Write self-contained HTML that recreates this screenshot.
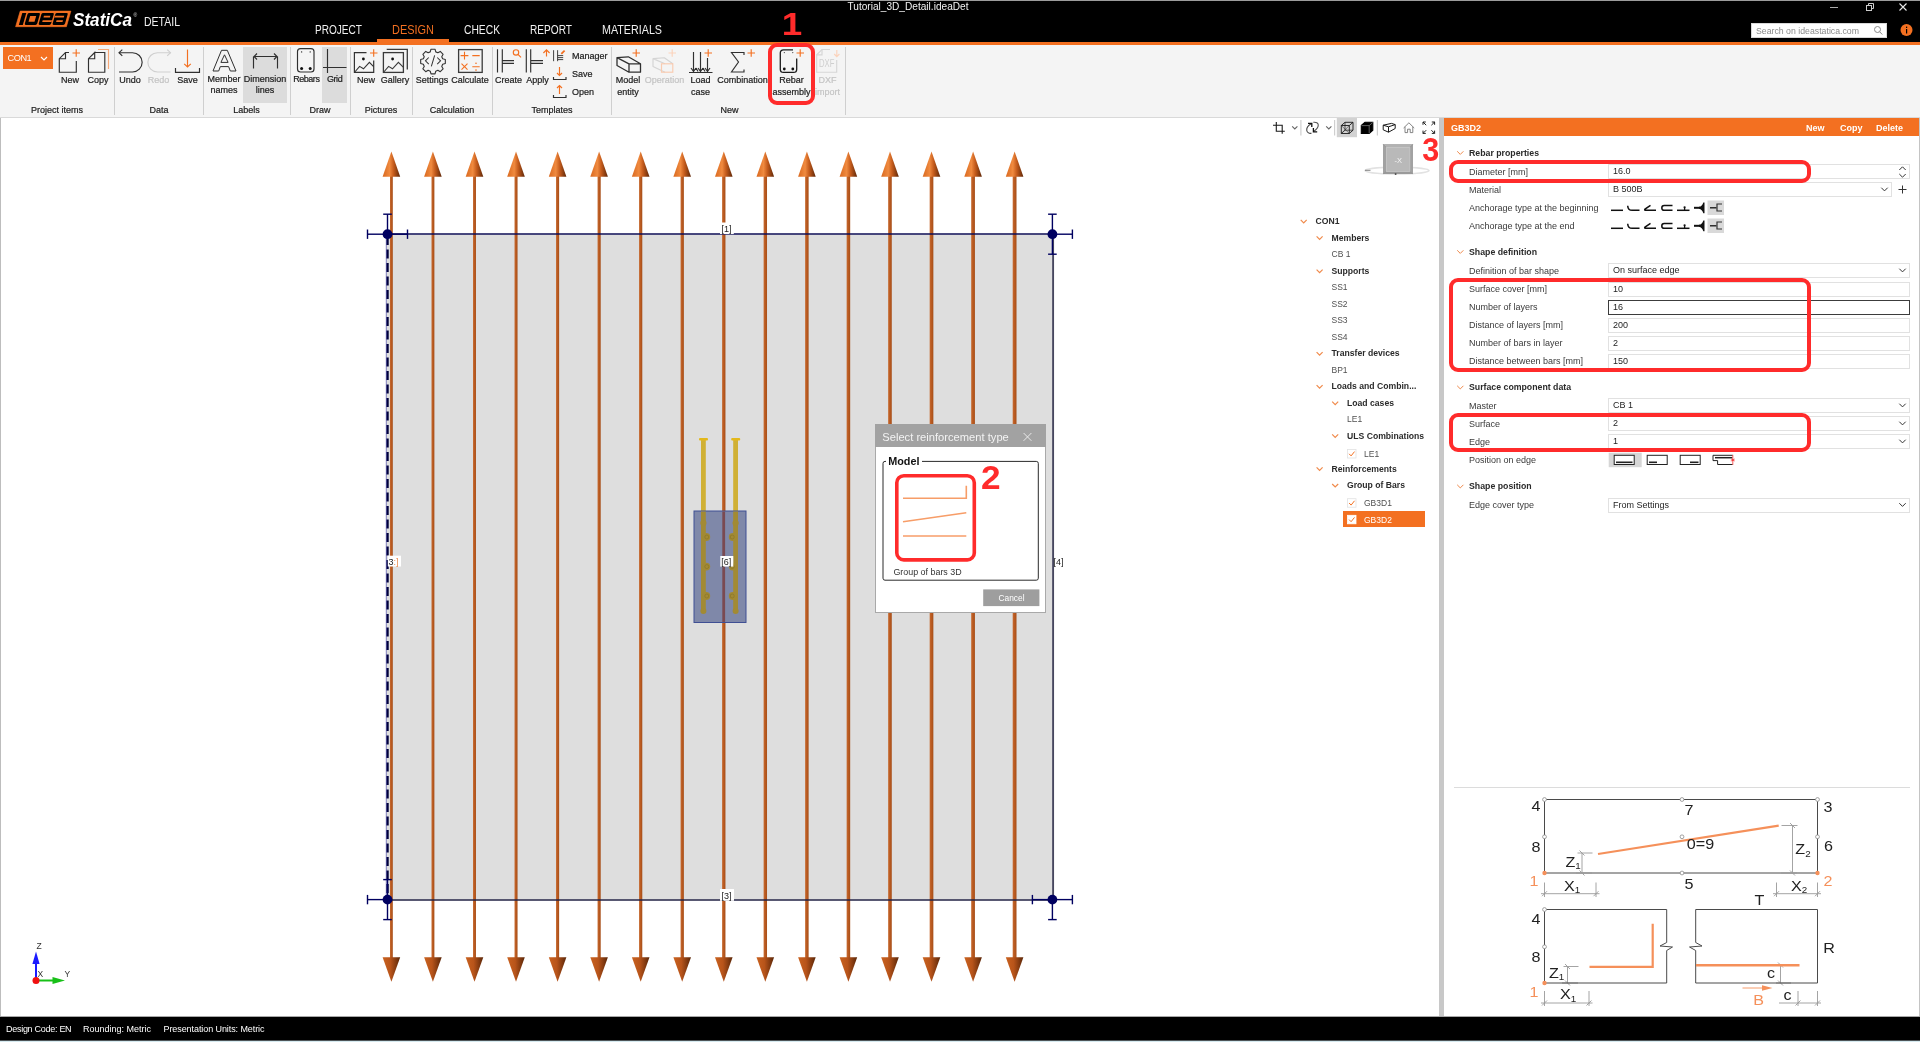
<!DOCTYPE html>
<html>
<head>
<meta charset="utf-8">
<title>Tutorial_3D_Detail.ideaDet</title>
<style>
*{box-sizing:border-box;margin:0;padding:0}
html,body{width:1920px;height:1042px;overflow:hidden;background:#fff;font-family:"Liberation Sans",sans-serif;font-size:9px;color:#2b2b2b}
.a{position:absolute}
.t{position:absolute;white-space:nowrap;line-height:12px;height:12px}
.c{text-align:center;transform:translateX(-50%)}
#top{left:0;top:0;width:1920px;height:42px;background:#000;border-top:1px solid #9c9c9c}
#oline{left:0;top:42px;width:1920px;height:3px;background:#f37021}
#ribbon{left:0;top:45px;width:1920px;height:72px;background:#f4f4f4}
#ribline{left:0;top:117px;width:1920px;height:1px;background:#d9d9d9}
.sep{position:absolute;top:47px;width:1px;height:68px;background:#cfcfcf}
.hl{position:absolute;top:47px;height:56px;background:#dcdcdc}
.tab{position:absolute;top:22px;font-size:12.5px;color:#f0f0f0;line-height:16px;white-space:nowrap}
.rl{font-size:9px;color:#1c1c1c;-webkit-text-stroke:0.2px #1c1c1c}
.dis{color:#c4c4c4;-webkit-text-stroke:0.2px #c4c4c4}
#view{left:0;top:118px;width:1439px;height:899px;background:#fff;border-left:1px solid #bdbdbd}
#split{left:1439px;top:118px;width:5px;height:899px;background:#c8c8c8}
#panel{left:1444px;top:118px;width:476px;height:899px;background:#fff;border-right:1px solid #c4c4c4}
#phead{left:1444px;top:118px;width:475px;height:18px;background:#f37021}
#status{left:0;top:1017px;width:1920px;height:23px;background:#000}
.st{color:#fff;font-size:9px;top:1023px}
.pl{left:1469px;color:#3a3a3a}
.pb{left:1469px;font-weight:bold;color:#2b2b2b;font-size:8.75px}
.inp{position:absolute;left:1608px;width:302px;height:15px;border:1px solid #e1e1e1;background:#fff}
.pv{left:1613px;color:#1e1e1e}
.tr{color:#505050;font-size:8.5px}
.tb{font-weight:bold;color:#2b2b2b;font-size:8.65px}
.red{position:absolute;border:3.5px solid #ff2b2b;border-radius:8px}
.num{position:absolute;color:#ff2b2b;font-weight:bold;font-size:34px;line-height:34px}
</style>
</head>
<body>
<div id="root" style="position:absolute;left:0;top:0;width:1920px;height:1042px;will-change:transform">
<div class="a" id="top"></div>
<div class="a" id="oline"></div>
<div class="a" id="ribbon"></div>
<div class="a" id="ribline"></div>
<!-- logo -->
<svg class="a" style="left:14px;top:9px" width="172" height="22" viewBox="0 0 172 22">
  <polygon points="6.2,2.1 56.9,2.1 52.4,17.7 1.6,17.7" fill="#f37021" stroke="#f37021" stroke-width="0.6" stroke-linejoin="round"/>
  <g transform="skewX(-16)" fill="#000" stroke="none">
    <rect x="9.4" y="3.9" width="4" height="12"/>
    <rect x="15" y="3.9" width="12.4" height="12" rx="1.4"/>
    <rect x="18.2" y="7" width="6" height="5.8" fill="#f37021"/>
    <rect x="28.9" y="3.9" width="12.4" height="12" rx="1.4"/>
    <rect x="31.9" y="6.7" width="6.4" height="1.7" fill="#f37021"/>
    <rect x="31.9" y="11.2" width="9.4" height="1.7" fill="#f37021"/>
    <rect x="42.8" y="3.9" width="12.4" height="12" rx="1.4"/>
    <rect x="42.8" y="6.7" width="9.4" height="1.7" fill="#f37021"/>
    <rect x="45.8" y="11.2" width="6.4" height="1.7" fill="#f37021"/>
  </g>
  <text x="59" y="17" font-family="Liberation Sans" font-weight="bold" font-style="italic" font-size="18" fill="#fff" textLength="59" lengthAdjust="spacingAndGlyphs">StatiCa</text>
  <text x="119.5" y="8" font-family="Liberation Sans" font-size="5" fill="#ddd">&#174;</text>
  <text x="130" y="17" font-family="Liberation Sans" font-size="12" fill="#f0f0f0" textLength="36" lengthAdjust="spacingAndGlyphs">DETAIL</text>
</svg>
<svg class="a" style="left:300px;top:18px" width="400" height="24" viewBox="0 0 400 24" font-family="Liberation Sans" font-size="12.5" fill="#f0f0f0">
  <text x="15" y="16" textLength="47" lengthAdjust="spacingAndGlyphs">PROJECT</text>
  <text x="92" y="16" textLength="42" lengthAdjust="spacingAndGlyphs" fill="#f37021">DESIGN</text>
  <text x="164" y="16" textLength="36" lengthAdjust="spacingAndGlyphs">CHECK</text>
  <text x="230" y="16" textLength="42" lengthAdjust="spacingAndGlyphs">REPORT</text>
  <text x="302" y="16" textLength="60" lengthAdjust="spacingAndGlyphs">MATERIALS</text>
</svg>
<div class="a" style="left:377px;top:39px;width:72px;height:3px;background:#f37021"></div>
<svg class="a" style="left:840px;top:0" width="140" height="14" viewBox="0 0 140 14"><text x="7.5" y="10" font-family="Liberation Sans" font-size="10.5" fill="#f2f2f2" textLength="121" lengthAdjust="spacingAndGlyphs">Tutorial_3D_Detail.ideaDet</text></svg>
<!-- window controls -->
<svg class="a" style="left:1820px;top:0" width="100" height="16" viewBox="0 0 100 16">
  <line x1="10" y1="7.5" x2="18" y2="7.5" stroke="#aaa" stroke-width="1"/>
  <rect x="46.5" y="5.5" width="5" height="5" fill="none" stroke="#ccc" stroke-width="1"/>
  <path d="M48.5 5.5V3.5H53.5V8.5H51.5" fill="none" stroke="#ccc" stroke-width="1"/>
  <path d="M79.5 3.5L86.5 10.5M86.5 3.5L79.5 10.5" stroke="#e8e8e8" stroke-width="1.1"/>
</svg>
<!-- search -->
<div class="a" style="left:1751px;top:23px;width:136px;height:15px;background:#fff;border:1px solid #d8d8d8"></div>
<svg class="a" style="left:1751px;top:23px" width="136" height="15" viewBox="0 0 136 15"><text x="5" y="11" font-family="Liberation Sans" font-size="9" fill="#8a8a8a" textLength="103" lengthAdjust="spacingAndGlyphs">Search on ideastatica.com</text>
<circle cx="126.5" cy="6.5" r="3" fill="none" stroke="#8a8a8a" stroke-width="1"/><line x1="128.7" y1="8.8" x2="131.3" y2="11.5" stroke="#8a8a8a" stroke-width="1"/></svg>
<svg class="a" style="left:1899px;top:23px" width="14" height="14" viewBox="0 0 14 14"><circle cx="7.5" cy="7" r="6" fill="#f37021"/><rect x="7" y="6" width="1.2" height="4.5" fill="#000"/><rect x="7" y="3.6" width="1.2" height="1.4" fill="#000"/></svg>
<!-- ribbon highlights & separators -->
<div class="hl" style="left:243px;width:44px"></div>
<div class="hl" style="left:322px;width:25px"></div>
<div class="sep" style="left:114px"></div><div class="sep" style="left:203px"></div><div class="sep" style="left:290px"></div>
<div class="sep" style="left:350px"></div><div class="sep" style="left:412px"></div><div class="sep" style="left:492px"></div>
<div class="sep" style="left:611px"></div><div class="sep" style="left:845px"></div>
<div class="a" style="left:3px;top:47px;width:49.7px;height:22px;background:#f37021"></div>
<div class="t" style="left:7.5px;top:52px;color:#fff;font-size:9.2px;letter-spacing:-0.45px">CON1</div>
<svg class="a" style="left:0;top:45px" width="860" height="72" viewBox="0 45 860 72" fill="none" stroke="#303030" stroke-width="1.15" stroke-linecap="butt">
  <path d="M41 57l3 3l3-3" stroke="#fff"/>
  <!-- New -->
  <path d="M69 52.5H65.5L59.3 58.7V72.2H76.3V61"/><path d="M65.5 52.5V58.7H59.3"/>
  <path d="M72.5 53H80M76.2 49.3V56.7" stroke="#f37021"/>
  <!-- Copy -->
  <path d="M94.7 52.5H104.8V72.2H88.5V58.7L94.7 52.5V58.7H88.5"/>
  <path d="M98 49.5H108.5V69" stroke="#f7a877"/>
  <!-- Undo -->
  <path d="M119 52.7H132.5A9.6 9.6 0 0 1 132.5 72H119"/><path d="M122.3 49.6L119 52.7L122.3 55.8"/>
  <!-- Redo -->
  <g stroke="#cfcfcf"><path d="M170.5 52.7H157.5A9.6 9.6 0 0 0 157.5 72H170.5"/><path d="M167.2 49.6L170.5 52.7L167.2 55.8"/></g>
  <!-- Save -->
  <path d="M187.5 49.5V67M184.2 63.8L187.5 67L190.8 63.8" stroke="#f37021"/>
  <path d="M175.5 68V72.3H199.5V68"/>
  <!-- Member names (A) -->
  <path d="M213 71L221.5 50.3H227.3L236 71H230.3L228.6 66.6H220.3L218.7 71Z M220.9 62.4L224.5 54.8L228.1 62.4Z" stroke-width="1"/>
  <!-- Dimension lines -->
  <path d="M253.5 56.5V68.5M277.5 56.5V68.5M254 56.5H277"/><path d="M257 53.5L254 56.5L257 59.5M274 53.5L277 56.5L274 59.5"/>
  <!-- Rebars -->
  <rect x="297.5" y="48.6" width="16.5" height="23.4" rx="3"/>
  <circle cx="301.6" cy="68.4" r="1.5" fill="#111" stroke="none"/><circle cx="310.2" cy="68.4" r="1.5" fill="#111" stroke="none"/>
  <circle cx="301.6" cy="51.9" r="0.7" fill="#2b2b2b" stroke="none"/><circle cx="310.2" cy="51.9" r="0.7" fill="#2b2b2b" stroke="none"/>
  <!-- Grid -->
  <path d="M327.5 49V73M323 67.5H346.5"/>
  <!-- New picture -->
  <g stroke="#333" stroke-width="1.2"><path d="M366.5 52.6H354.4V72.3H373.7V60.6"/><path d="M354.8 72L359.6 66.4L363.5 68.8L369.4 62.4L373.6 66.6" stroke-width="1.1"/></g><circle cx="363.4" cy="59" r="1.4" fill="#111" stroke="none"/>
  <path d="M370 53H377.5M373.7 49.3V56.7" stroke="#f37021"/>
  <!-- Gallery -->
  <g stroke="#3a3a3a" stroke-width="1.3"><rect x="383.4" y="52.6" width="20" height="19.8"/><path d="M383.8 72L388.6 66.4L392.5 68.8L398.4 62.4L403.2 67.2" stroke-width="1.1"/><path d="M386.7 49.4H407.3V69.6"/></g><circle cx="392.6" cy="59" r="1.4" fill="#111" stroke="none"/>
  <!-- Settings gear -->
  <g transform="translate(433,60.8) scale(0.92)" stroke="#333">
    <path d="M-2.2,-12.6h4.4l.8,2.9l2.3,1l2.6,-1.5l3.1,3.1l-1.5,2.6l1,2.3l2.9,.8v4.4l-2.9,.8l-1,2.3l1.5,2.6l-3.1,3.1l-2.6,-1.5l-2.3,1l-.8,2.9h-4.4l-.8,-2.9l-2.3,-1l-2.6,1.5l-3.1,-3.1l1.5,-2.6l-1,-2.3l-2.9,-.8v-4.4l2.9,-.8l1,-2.3l-1.5,-2.6l3.1,-3.1l2.6,1.5l2.3,-1z" stroke-width="1.2" stroke-linejoin="round"/>
    <path d="M-4.6,-3.6L-8.2,0L-4.6,3.6M4.6,-3.6L8.2,0L4.6,3.6M1.8,-6L-1.8,6" stroke-width="1.1"/>
  </g>
  <!-- Calculate -->
  <rect x="458.6" y="49.6" width="23.6" height="22.8" stroke="#3a3a3a" stroke-width="1.3"/>
  <path d="M460.6 55.6H468.4M464.5 51.7V59.5M472.3 55.6H479.7M461.5 63.7L467.5 69.7M467.5 63.7L461.5 69.7M472.3 66.7H479.7" stroke="#f37021" stroke-width="1.1"/>
  <circle cx="476" cy="63.3" r="0.8" fill="#f37021" stroke="none"/><circle cx="476" cy="70.1" r="0.8" fill="#f37021" stroke="none"/>
  <!-- Create -->
  <path d="M497.5 49.2V72.4M502.3 49.2V72.4M502.3 60.6H514M502.3 63.4H514"/>
  <circle cx="516" cy="52.4" r="2.7" stroke="#f37021"/><path d="M518 54.4L521 57.4" stroke="#f37021"/>
  <!-- Apply -->
  <path d="M526.3 49.2V72.4M530.7 49.2V72.4M530.7 60.6H543M530.7 63.4H543"/>
  <path d="M546.5 56.6V49.8M543.4 53L546.5 49.8L549.6 53" stroke="#f37021"/>
  <!-- Manager small -->
  <path d="M553.6 50.2V61.2M557.6 50.2V61.2M557.6 55.6H563.2M557.6 57.6H563.2M557.6 59.6H563.2" stroke-width="0.9"/><path d="M561.3 53.8L564.6 50.6" stroke="#f37021" stroke-width="1.8"/>
  <!-- Save small -->
  <path d="M559.5 67V75.5M557 73L559.5 75.5L562 73" stroke="#f37021"/><path d="M553.5 77V79.5H566V77"/>
  <!-- Open small -->
  <path d="M559.5 94V85.5M557 88L559.5 85.5L562 88" stroke="#f37021"/><path d="M553.5 95V97.5H566V95"/>
  <!-- Model entity -->
  <path d="M617 57.6L628.3 56.8L640.5 63.8V72.2H629L617 65.5Z M617 57.6L629 63.8H640.5M629 63.8V72.2" stroke-width="1.3" stroke-linejoin="round"/>
  <path d="M632.5 53H640M636.2 49.3V56.7" stroke="#f37021"/>
  <!-- Operation (disabled) -->
  <path d="M653 58.6L664.3 57.8L672.8 63.8M665 72.2L653 66.5V58.6L665 63.8" stroke="#d4d4d4" stroke-linejoin="round"/>
  <rect x="661.5" y="63.8" width="11.3" height="8.4" stroke="#f9cbb0"/>
  <path d="M668.5 53H676M672.2 49.3V56.7" stroke="#fbd3bb"/>
  <!-- Load case -->
  <path d="M689 72.5H712.5M693.5 52V71.5M700.5 52V71.5M707.5 58V71.5M691 68L693.5 71.5L696 68M698 68L700.5 71.5L703 68M705 68L707.5 71.5L710 68M696 68L698 71.5M703 68L705 71.5"/>
  <path d="M704.5 53H712M708.2 49.3V56.7" stroke="#f37021"/>
  <!-- Combination -->
  <path d="M744 55V52.5H731.5L738.5 62L731.5 72H744V69.5"/>
  <path d="M747.5 53H755M751.2 49.3V56.7" stroke="#f37021"/>
  <!-- Rebar assembly -->
  <path d="M793 49.8H783.5A3.2 3.2 0 0 0 780.3 53V69.2A3.2 3.2 0 0 0 783.5 72.4H793.5A3.2 3.2 0 0 0 796.7 69.2V58.5" stroke-width="1.3" stroke="#1c1c1c"/>
  <circle cx="784.3" cy="69" r="1.4" fill="#111" stroke="none"/><circle cx="792.8" cy="69" r="1.4" fill="#111" stroke="none"/>
  <circle cx="784.3" cy="52.6" r="0.55" fill="#2b2b2b" stroke="none"/><circle cx="792.8" cy="52.6" r="0.55" fill="#2b2b2b" stroke="none"/>
  <path d="M796.5 53H804M800.2 49.3V56.7" stroke="#f37021"/>
  <!-- DXF import (disabled) -->
  <g stroke="#d6d6d6"><path d="M830 49.5H822L816.7 54.8V72.2H836.7V60"/><path d="M822 49.5V54.8H816.7"/></g>
  <path d="M836.8 50V56.5M834.2 54L836.8 56.7L839.4 54" stroke="#fbd3bb"/>
  <text x="819" y="67.4" font-family="Liberation Sans" font-size="10.8" fill="#cfcfcf" stroke="none" textLength="15.4" lengthAdjust="spacingAndGlyphs">DXF</text>
</svg>
<!-- ribbon labels -->
<div class="t c rl" style="left:70px;top:74px">New</div>
<div class="t c rl" style="left:98px;top:74px">Copy</div>
<div class="t c rl" style="left:130px;top:74px">Undo</div>
<div class="t c rl dis" style="left:158.5px;top:74px">Redo</div>
<div class="t c rl" style="left:187.5px;top:74px">Save</div>
<div class="t c rl" style="left:224px;top:73px">Member</div><div class="t c rl" style="left:224px;top:84px">names</div>
<div class="t c rl" style="left:265px;top:73px">Dimension</div><div class="t c rl" style="left:265px;top:84px">lines</div>
<div class="t c rl" style="left:306.3px;top:73px;letter-spacing:-0.45px">Rebars</div>
<div class="t c rl" style="left:334.6px;top:73px;letter-spacing:-0.45px">Grid</div>
<div class="t c rl" style="left:366px;top:74px">New</div>
<div class="t c rl" style="left:395px;top:74px">Gallery</div>
<div class="t c rl" style="left:432px;top:74px">Settings</div>
<div class="t c rl" style="left:470px;top:74px">Calculate</div>
<div class="t c rl" style="left:508.5px;top:74px">Create</div>
<div class="t c rl" style="left:537.5px;top:74px">Apply</div>
<div class="t rl" style="left:572px;top:50px">Manager</div>
<div class="t rl" style="left:572px;top:68px">Save</div>
<div class="t rl" style="left:572px;top:86px">Open</div>
<div class="t c rl" style="left:628px;top:74px">Model</div><div class="t c rl" style="left:628px;top:85.5px">entity</div>
<div class="t c rl dis" style="left:664.5px;top:74px">Operation</div>
<div class="t c rl" style="left:700.5px;top:74px">Load</div><div class="t c rl" style="left:700.5px;top:85.5px">case</div>
<div class="t c rl" style="left:742.5px;top:74px">Combination</div>
<div class="t c rl" style="left:791.5px;top:74px">Rebar</div><div class="t c rl" style="left:791.5px;top:85.5px">assembly</div>
<div class="t c rl dis" style="left:827.5px;top:74px">DXF</div><div class="t c rl dis" style="left:827.5px;top:85.5px">import</div>
<!-- group labels -->
<div class="t c rl" style="left:57px;top:104px">Project items</div>
<div class="t c rl" style="left:159px;top:104px">Data</div>
<div class="t c rl" style="left:246.5px;top:104px">Labels</div>
<div class="t c rl" style="left:320px;top:104px">Draw</div>
<div class="t c rl" style="left:381px;top:104px">Pictures</div>
<div class="t c rl" style="left:452px;top:104px">Calculation</div>
<div class="t c rl" style="left:552px;top:104px">Templates</div>
<div class="t c rl" style="left:729.5px;top:104px">New</div>
<div class="a" id="view"></div>
<svg class="a" style="left:0;top:118px" width="1440" height="898" viewBox="0 118 1440 898">
<defs>
  <linearGradient id="gb" x1="0" x2="1" y1="0" y2="0"><stop offset="0" stop-color="#c66a30"/><stop offset="0.4" stop-color="#bc5c22"/><stop offset="1" stop-color="#a64e18"/></linearGradient>
  <linearGradient id="ga" x1="0" x2="1" y1="0" y2="0"><stop offset="0" stop-color="#d9691f"/><stop offset="0.4" stop-color="#f08a3f"/><stop offset="0.62" stop-color="#c65c1c"/><stop offset="1" stop-color="#5e2708"/></linearGradient>
  <linearGradient id="gd" x1="0" x2="1" y1="0" y2="0"><stop offset="0" stop-color="#c9621f"/><stop offset="0.45" stop-color="#b8541a"/><stop offset="1" stop-color="#5a2608"/></linearGradient>
  <g id="ah">
    <polygon points="0,151.5 8.8,176.8 -8.8,176.8" fill="url(#ga)"/>
    <polygon points="-8.8,957.3 8.8,957.3 0,981.8" fill="url(#gd)"/>
  </g>
</defs>
<rect x="386.8" y="234.5" width="665.7" height="665" fill="#dedede"/>
<!-- left dashed edge -->
<path d="M387.4 236V898" stroke="#00003c" stroke-width="2.6" stroke-dasharray="9 4.5"/>
<path d="M386.3 236V898" stroke="#5c5ca8" stroke-width="0.8"/>
<!-- bars -->
<rect x="390.00" y="176" width="2.80" height="782" fill="url(#gb)"/><use href="#ah" x="391.4"/><rect x="431.51" y="176" width="2.87" height="782" fill="url(#gb)"/><use href="#ah" x="432.9"/><rect x="473.03" y="176" width="2.93" height="782" fill="url(#gb)"/><use href="#ah" x="474.5"/><rect x="514.54" y="176" width="3.00" height="782" fill="url(#gb)"/><use href="#ah" x="516.0"/><rect x="556.05" y="176" width="3.07" height="782" fill="url(#gb)"/><use href="#ah" x="557.6"/><rect x="597.57" y="176" width="3.13" height="782" fill="url(#gb)"/><use href="#ah" x="599.1"/><rect x="639.08" y="176" width="3.20" height="782" fill="url(#gb)"/><use href="#ah" x="640.7"/><rect x="680.60" y="176" width="3.27" height="782" fill="url(#gb)"/><use href="#ah" x="682.2"/><rect x="722.11" y="176" width="3.33" height="782" fill="url(#gb)"/><use href="#ah" x="723.8"/><rect x="763.62" y="176" width="3.40" height="782" fill="url(#gb)"/><use href="#ah" x="765.3"/><rect x="805.14" y="176" width="3.47" height="782" fill="url(#gb)"/><use href="#ah" x="806.9"/><rect x="846.65" y="176" width="3.53" height="782" fill="url(#gb)"/><use href="#ah" x="848.4"/><rect x="888.16" y="176" width="3.60" height="782" fill="url(#gb)"/><use href="#ah" x="890.0"/><rect x="929.68" y="176" width="3.67" height="782" fill="url(#gb)"/><use href="#ah" x="931.5"/><rect x="971.19" y="176" width="3.73" height="782" fill="url(#gb)"/><use href="#ah" x="973.1"/><rect x="1012.70" y="176" width="3.80" height="782" fill="url(#gb)"/><use href="#ah" x="1014.6"/>
<!-- borders -->
<path d="M388 233.9H1052.4" stroke="#0c0c54" stroke-width="1.5"/>
<path d="M388 900.1H1052.4" stroke="#222244" stroke-width="1.5"/>
<path d="M1053.1 234V900" stroke="#46465e" stroke-width="1.9"/>
<!-- plate + anchors -->
<g>
  <rect x="701" y="439.5" width="4.8" height="72" fill="#d0b034"/><rect x="733.2" y="439.5" width="4.8" height="72" fill="#d0b034"/>
  <rect x="699" y="438" width="9" height="2.6" rx="1" fill="#e3b81c"/><rect x="731.2" y="438" width="9" height="2.6" rx="1" fill="#e3b81c"/>
  <rect x="694" y="511" width="52" height="111.5" fill="#7f88a9" stroke="#3f4f93" stroke-width="1"/>
  <rect x="722.3" y="511.5" width="2.8" height="110.5" fill="#7a4a52"/>
  <g fill="#a28a34"><rect x="701" y="511.5" width="4.8" height="99"/><rect x="733.2" y="511.5" width="4.8" height="99"/>
  <circle cx="703.4" cy="523" r="3.1"/><circle cx="735.6" cy="523" r="3.1"/>
  <circle cx="706.3" cy="537" r="3.9"/><circle cx="732.7" cy="537" r="3.9"/>
  <circle cx="706.3" cy="566.6" r="3.9"/><circle cx="732.7" cy="566.6" r="3.9"/>
  <circle cx="706.3" cy="596" r="3.9"/><circle cx="732.7" cy="596" r="3.9"/>
  <circle cx="703.4" cy="611" r="3"/><circle cx="735.6" cy="611" r="3"/></g>
  <g fill="none" stroke="#8a7428" stroke-width="0.7"><circle cx="706.8" cy="537" r="2"/><circle cx="732.2" cy="537" r="2"/><circle cx="706.8" cy="566.6" r="2"/><circle cx="732.2" cy="566.6" r="2"/><circle cx="706.8" cy="596" r="2"/><circle cx="732.2" cy="596" r="2"/></g>
</g>
<!-- support nodes -->
<g stroke="#000060" stroke-width="1.4" fill="none"><path d="M387.5 234.2L367.5 234.2"/><path d="M367.5 229.5V238.89999999999998"/><path d="M387.5 234.2L407.5 234.2"/><path d="M407.5 229.5V238.89999999999998"/><path d="M387.5 234.2L387.5 214.2"/><path d="M383.2 214.2H391.8"/><circle cx="387.5" cy="234.2" r="4.9" fill="#000060" stroke="none"/><path d="M1052.4 234.2L1072.4 234.2"/><path d="M1072.4 229.5V238.89999999999998"/><path d="M1052.4 234.2L1052.4 214.2"/><path d="M1048.1000000000001 214.2H1056.7"/><path d="M1052.4 234.2L1052.4 254.2"/><path d="M1048.1000000000001 254.2H1056.7"/><circle cx="1052.4" cy="234.2" r="4.9" fill="#000060" stroke="none"/><path d="M387.5 899.6L367.5 899.6"/><path d="M367.5 894.9V904.3000000000001"/><path d="M387.5 899.6L387.5 879.6"/><path d="M383.2 879.6H391.8"/><path d="M387.5 899.6L387.5 919.6"/><path d="M383.2 919.6H391.8"/><circle cx="387.5" cy="899.6" r="4.9" fill="#000060" stroke="none"/><path d="M1052.4 899.6L1032.4 899.6"/><path d="M1032.4 894.9V904.3000000000001"/><path d="M1052.4 899.6L1072.4 899.6"/><path d="M1072.4 894.9V904.3000000000001"/><path d="M1052.4 899.6L1052.4 919.6"/><path d="M1048.1000000000001 919.6H1056.7"/><circle cx="1052.4" cy="899.6" r="4.9" fill="#000060" stroke="none"/></g>
<!-- labels -->
<g font-family="Liberation Sans" font-size="9" fill="#222">
  <rect x="720" y="222.5" width="13.8" height="11.6" fill="#fff"/><text x="721.5" y="232.3">[1]</text>
  <rect x="720" y="889" width="14" height="11.8" fill="#fff"/><text x="721.6" y="898.6">[3]</text>
  <rect x="387.8" y="555.7" width="13.2" height="10.8" fill="#fff"/><text x="388.5" y="564.5">3<tspan fill="#e8894d">:]</tspan></text>
  <text x="1053.5" y="564.5">[4]</text>
  <rect x="720.3" y="556" width="13" height="10.6" fill="#fff"/><text x="721.3" y="564.5">[6]</text>
</g>
<!-- axis triad -->
<g>
  <path d="M36 980V958" stroke="#1a1aff" stroke-width="2"/><polygon points="36,951.5 39.6,964 32.4,964" fill="#1a1aff"/>
  <path d="M36 980.5H55" stroke="#18c018" stroke-width="2"/><polygon points="65,980.5 52.5,984 52.5,977" fill="#18c018"/>
  <circle cx="36" cy="980.5" r="3.5" fill="#f01010"/>
  <g font-family="Liberation Sans" font-size="8.5" fill="#333"><text x="36.5" y="949">Z</text><text x="37.5" y="977">X</text><text x="64.5" y="977">Y</text></g>
</g>
</svg>
<div class="a" style="left:1343.3px;top:511.2px;width:82px;height:16.2px;background:#f37021"></div>
<div class="t tb" style="left:1315.5px;top:215.0px">CON1</div><div class="t tb" style="left:1331.5px;top:231.5px">Members</div><div class="t tr" style="left:1331.5px;top:248.2px">CB 1</div><div class="t tb" style="left:1331.5px;top:264.7px">Supports</div><div class="t tr" style="left:1331.5px;top:281.1px">SS1</div><div class="t tr" style="left:1331.5px;top:297.7px">SS2</div><div class="t tr" style="left:1331.5px;top:314.1px">SS3</div><div class="t tr" style="left:1331.5px;top:330.5px">SS4</div><div class="t tb" style="left:1331.5px;top:347.2px">Transfer devices</div><div class="t tr" style="left:1331.5px;top:363.5px">BP1</div><div class="t tb" style="left:1331.5px;top:380.2px">Loads and Combin...</div><div class="t tb" style="left:1347px;top:396.7px">Load cases</div><div class="t tr" style="left:1347px;top:413.1px">LE1</div><div class="t tb" style="left:1347px;top:429.5px">ULS Combinations</div><div class="t tr" style="left:1364px;top:447.7px">LE1</div><div class="t tb" style="left:1331.5px;top:462.5px">Reinforcements</div><div class="t tb" style="left:1347px;top:479.1px">Group of Bars</div><div class="t tr" style="left:1364px;top:496.9px">GB3D1</div><div class="t tr" style="left:1364px;top:513.5px;color:#fff">GB3D2</div>
<svg class="a" style="left:1260px;top:118px" width="180" height="420" viewBox="1260 118 180 420">

<rect x="1336.8" y="118" width="20.2" height="19.2" fill="#d2d2d2"/>
<g fill="none" stroke="#1a1a1a" stroke-width="1.1">
<path d="M1276.3 122V131.2H1284.8M1273 125.2H1282.2V133.8"/>
<path d="M1292.2 126.3L1294.8 128.9L1297.4 126.3" stroke="#666"/>
<path d="M1326.2 126.3L1328.8 128.9L1331.4 126.3" stroke="#666"/>
<path d="M1300.9 120V135.5M1334.6 120V135.5M1377.4 120V135.5" stroke="#cfcfcf" stroke-width="1.2"/>
<!-- rotate -->
<g stroke-width="1.1"><path d="M1311.5 133.3C1305.8 133.9 1304.6 127.6 1311.2 123.8" stroke="#444"/><path d="M1308 123.3H1311.8V127.1" stroke="#111" stroke-width="1.3"/>
<path d="M1313.3 122.3C1319.4 121.4 1320.2 126.8 1313.9 131.3" stroke="#555"/><path d="M1313.4 128V131.8H1317.2" stroke="#111" stroke-width="1.3"/></g>
<!-- wire cube -->
<g stroke-width="0.9"><path d="M1341.3 125.5L1345 122.3H1353V130.2L1349.3 133.5H1341.3Z"/><path d="M1341.3 125.5H1349.3V133.5M1349.3 125.5L1353 122.3"/><path d="M1345 122.3V130.2H1353M1345 130.2L1341.3 133.5" stroke-width="0.7"/><path d="M1341.3 125.5L1349.3 133.5M1349.3 125.5L1341.3 133.5" stroke-width="0.5"/></g>
<!-- solid cube -->
<path d="M1361.3 125.5L1365 122.3H1372.8V130.2L1369.2 133.5H1361.3Z" fill="#000" stroke="#000"/><path d="M1361.5 125.6H1369.2V133.3M1369.2 125.6L1372.6 122.6" stroke="#bbb" stroke-width="0.5"/>
<!-- perspective box -->
<g stroke-width="1"><path d="M1383.2 125.2L1391.5 123.4L1395.2 124.6V128.5L1388.5 132.2L1383.2 129.8Z"/><path d="M1383.2 125.2L1388.5 126.8V132.2M1388.5 126.8L1395.2 124.6"/></g>
<!-- home -->
<path d="M1403.6 128L1408.9 122.8L1414.2 128M1405 126.8V132.6H1407.6V129.2H1410.2V132.6H1412.8V126.8" stroke="#777" stroke-width="0.9"/>
<!-- fullscreen -->
<g stroke="#222" stroke-width="1"><path d="M1423 124.8V122H1425.8M1423 122L1426.2 125.2M1434.6 124.8V122H1431.8M1434.6 122L1431.4 125.2M1423 130.6V133.4H1425.8M1423 133.4L1426.2 130.2M1434.6 130.6V133.4H1431.8M1434.6 133.4L1431.4 130.2"/></g>
</g>
<!-- view cube -->
<ellipse cx="1397" cy="170.6" rx="32" ry="3.4" fill="none" stroke="#e2e2e2" stroke-width="1.6"/>
<path d="M1365 170.3H1370.5" stroke="#666" stroke-width="0.8"/>
<rect x="1383" y="144.2" width="30" height="29.8" fill="#a6a6a6"/>
<polygon points="1383,144.2 1413,144.2 1409.8,147.6 1386.4,147.6" fill="#b2b2b2"/>
<polygon points="1383,174 1413,174 1409.8,171.4 1386.4,171.4" fill="#9a9a9a"/>
<polygon points="1383,144.2 1386.4,147.6 1386.4,171.4 1383,174" fill="#a2a2a2"/><polygon points="1413,144.2 1409.8,147.6 1409.8,171.4 1413,174" fill="#a2a2a2"/><path d="M1383 144.2L1386.4 147.6M1413 144.2L1409.8 147.6M1383 174L1386.4 171.4M1413 174L1409.8 171.4" stroke="#8e8e8e" stroke-width="0.6"/><rect x="1386.4" y="147.6" width="23.4" height="23.8" fill="#b9b9b9" stroke="#c9c9c9" stroke-width="0.8"/>
<text x="1394.5" y="163" font-family="Liberation Sans" font-size="7.5" fill="#f4f4f4">-X</text>
<rect x="1394.8" y="173.4" width="1.6" height="1.4" fill="#333"/>

<path d="M1300.7 219.9L1303.7 222.9L1306.7 219.9" stroke="#f08a4b" fill="none" stroke-width="1.2"/><path d="M1316.6 236.4L1319.6 239.4L1322.6 236.4" stroke="#f08a4b" fill="none" stroke-width="1.2"/><path d="M1316.6 269.59999999999997L1319.6 272.59999999999997L1322.6 269.59999999999997" stroke="#f08a4b" fill="none" stroke-width="1.2"/><path d="M1316.6 352.09999999999997L1319.6 355.09999999999997L1322.6 352.09999999999997" stroke="#f08a4b" fill="none" stroke-width="1.2"/><path d="M1316.6 385.09999999999997L1319.6 388.09999999999997L1322.6 385.09999999999997" stroke="#f08a4b" fill="none" stroke-width="1.2"/><path d="M1332.2 401.59999999999997L1335.2 404.59999999999997L1338.2 401.59999999999997" stroke="#f08a4b" fill="none" stroke-width="1.2"/><path d="M1332.2 434.4L1335.2 437.4L1338.2 434.4" stroke="#f08a4b" fill="none" stroke-width="1.2"/><rect x="1347.5" y="449.5" width="8.5" height="8.5" fill="#fff" stroke="#e2e2e2" stroke-width="0.8"/><path d="M1349.1 453.8L1351.1 455.9L1354.5 451.6" stroke="#f37021" fill="none" stroke-width="1"/><path d="M1316.6 467.4L1319.6 470.4L1322.6 467.4" stroke="#f08a4b" fill="none" stroke-width="1.2"/><path d="M1332.2 484.0L1335.2 487.0L1338.2 484.0" stroke="#f08a4b" fill="none" stroke-width="1.2"/><rect x="1347.5" y="498.7" width="8.5" height="8.5" fill="#fff" stroke="#e2e2e2" stroke-width="0.8"/><path d="M1349.1 503.0L1351.1 505.09999999999997L1354.5 500.8" stroke="#f37021" fill="none" stroke-width="1"/><rect x="1347.5" y="515.3" width="8.5" height="8.5" fill="#fff" stroke="#fff" stroke-width="0.8"/><path d="M1349.1 519.5999999999999L1351.1 521.6999999999999L1354.5 517.4" stroke="#f37021" fill="none" stroke-width="1"/>
</svg>
<div class="a" style="left:875px;top:424px;width:170.5px;height:189px;background:#fff;border:1px solid #a9a9a9"></div>
<div class="a" style="left:875px;top:424px;width:170.5px;height:23px;background:#a2a2a2"></div>
<svg class="a" style="left:875px;top:424px" width="171" height="190" viewBox="875 424 171 190" font-family="Liberation Sans">
  <text x="882.3" y="441" font-size="11" fill="#f3f3f3" textLength="126.5" lengthAdjust="spacingAndGlyphs">Select reinforcement type</text>
  <path d="M1023.6 433L1031.4 440.8M1031.4 433L1023.6 440.8" stroke="#f0f0f0" stroke-width="0.9"/>
  <rect x="883" y="461.4" width="155.3" height="118.8" rx="2" fill="none" stroke="#2a2a2a" stroke-width="1"/>
  <rect x="886" y="456" width="36" height="10" fill="#fff"/>
  <text x="888.2" y="465" font-size="10" font-weight="bold" fill="#111" textLength="31.3" lengthAdjust="spacingAndGlyphs">Model</text>
  <g fill="none" stroke="#f79d68" stroke-width="1.6"><path d="M903 498.2H966.3V485.8"/><path d="M903 521.7L966.3 512.7"/><path d="M903 536H966.3"/></g>
  <rect x="896.8" y="475.7" width="77.5" height="84.2" rx="7" fill="none" stroke="#ff2b2b" stroke-width="3.6"/>
  <text x="893.4" y="575.2" font-size="9" fill="#333" textLength="68.3" lengthAdjust="spacingAndGlyphs">Group of bars 3D</text>
  <rect x="983.2" y="589.4" width="56.2" height="16.7" fill="#9e9e9e"/>
  <text x="998.5" y="601.4" font-size="9.5" fill="#fff" textLength="26" lengthAdjust="spacingAndGlyphs">Cancel</text>
</svg>
<div class="a" id="split"></div>
<div class="a" id="panel"></div>
<div class="a" id="phead"></div>
<div class="t" style="left:1451px;top:121.5px;color:#fff;font-weight:bold;font-size:9px">GB3D2</div>
<div class="t" style="left:1806px;top:121.5px;color:#fff;font-weight:bold;font-size:9px">New</div>
<div class="t" style="left:1840px;top:121.5px;color:#fff;font-weight:bold;font-size:9px">Copy</div>
<div class="t" style="left:1876px;top:121.5px;color:#fff;font-weight:bold;font-size:9px">Delete</div>
<div class="t pb" style="top:146.5px">Rebar properties</div><div class="t pl" style="top:165.5px">Diameter [mm]</div><div class="inp" style="top:164px;width:302px"></div><div class="t pv" style="top:165px">16.0</div><div class="t pl" style="top:183.5px">Material</div><div class="inp" style="top:182px;width:284px"></div><div class="t pv" style="top:183px">B 500B</div><div class="t pl" style="top:202.0px">Anchorage type at the beginning</div><div class="t pl" style="top:220.0px">Anchorage type at the end</div><div class="t pb" style="top:245.5px">Shape definition</div><div class="t pl" style="top:264.5px">Definition of bar shape</div><div class="inp" style="top:263px;width:302px"></div><div class="t pv" style="top:264px">On surface edge</div><div class="t pl" style="top:283.0px">Surface cover [mm]</div><div class="inp" style="top:281.5px;width:302px"></div><div class="t pv" style="top:282.5px">10</div><div class="t pl" style="top:301.0px">Number of layers</div><div class="inp" style="top:299.5px;width:302px;border:1px solid #3c3c3c;height:15.5px"></div><div class="t pv" style="top:300.5px">16</div><div class="t pl" style="top:319.0px">Distance of layers [mm]</div><div class="inp" style="top:317.5px;width:302px"></div><div class="t pv" style="top:318.5px">200</div><div class="t pl" style="top:337.0px">Number of bars in layer</div><div class="inp" style="top:335.5px;width:302px"></div><div class="t pv" style="top:336.5px">2</div><div class="t pl" style="top:355.0px">Distance between bars [mm]</div><div class="inp" style="top:353.5px;width:302px"></div><div class="t pv" style="top:354.5px">150</div><div class="t pb" style="top:381.0px">Surface component data</div><div class="t pl" style="top:399.5px">Master</div><div class="inp" style="top:398px;width:302px"></div><div class="t pv" style="top:399px">CB 1</div><div class="t pl" style="top:417.5px">Surface</div><div class="inp" style="top:416px;width:302px"></div><div class="t pv" style="top:417px">2</div><div class="t pl" style="top:435.5px">Edge</div><div class="inp" style="top:434px;width:302px"></div><div class="t pv" style="top:435px">1</div><div class="t pl" style="top:454.0px">Position on edge</div><div class="t pb" style="top:480.0px">Shape position</div><div class="t pl" style="top:499.0px">Edge cover type</div><div class="inp" style="top:497.5px;width:302px"></div><div class="t pv" style="top:498.5px">From Settings</div>
<div class="a" style="left:1454px;top:786.5px;width:456px;height:1px;background:#dcdcdc"></div>
<svg class="a" style="left:1444px;top:136px" width="474" height="400" viewBox="1444 136 474 400" fill="none" stroke-width="1">
<path d="M1457.2 151.3L1460.3 154.4L1463.4 151.3" stroke="#f08a4b"/><path d="M1881.3 187.7L1884.5 190.9L1887.7 187.7" stroke="#333"/><path d="M1457.2 250.3L1460.3 253.4L1463.4 250.3" stroke="#f08a4b"/><path d="M1899.3 268.7L1902.5 271.9L1905.7 268.7" stroke="#333"/><path d="M1457.2 385.8L1460.3 388.9L1463.4 385.8" stroke="#f08a4b"/><path d="M1899.3 403.7L1902.5 406.9L1905.7 403.7" stroke="#333"/><path d="M1899.3 421.7L1902.5 424.9L1905.7 421.7" stroke="#333"/><path d="M1899.3 439.7L1902.5 442.9L1905.7 439.7" stroke="#333"/><path d="M1457.2 484.8L1460.3 487.9L1463.4 484.8" stroke="#f08a4b"/><path d="M1899.3 503.2L1902.5 506.4L1905.7 503.2" stroke="#333"/>
<path d="M1899.3 170L1902.5 166.8L1905.7 170M1899.3 174L1902.5 177.2L1905.7 174" stroke="#333"/><path d="M1898.5 189.5H1906.5M1902.5 185.5V193.5" stroke="#333"/>
<rect x="1707.5" y="200.5" width="16.5" height="14.5" fill="#d9d9d9" stroke="none"/>
<g stroke="#111" stroke-width="1.5" fill="none">
<path d="M1611 210.3H1623"/>
<path d="M1627.7 205.70000000000002Q1627.9 210.3 1632.2 210.3H1639.5"/>
<path d="M1650.5 205.3L1645 209.10000000000002Q1644 210.3 1646 210.3H1656"/>
<path d="M1672.5 205.5H1664.2A2.4 2.4 0 0 0 1664.2 210.3H1672.5"/>
<path d="M1677 210.3H1689.5"/><path d="M1684.6 210.3V207.8" stroke-width="1.3"/><circle cx="1684.6" cy="207.3" r="1.1" fill="#111" stroke="none"/>
<path d="M1694 207.8H1700" stroke-width="2"/><path d="M1699 206.8Q1702.2 206.20000000000002 1703.3 202.4H1704.5V213.20000000000002H1703.3Q1702.2 209.4 1699 208.8Z" fill="#111" stroke="none"/>
<path d="M1710 207.8H1716.5" stroke-width="1.3"/><path d="M1722 204.0H1717V211.0H1722" stroke-width="1.2" stroke="#333"/>
</g>
<rect x="1707.5" y="218.5" width="16.5" height="14.5" fill="#d9d9d9" stroke="none"/>
<g stroke="#111" stroke-width="1.5" fill="none">
<path d="M1611 228.3H1623"/>
<path d="M1627.7 223.70000000000002Q1627.9 228.3 1632.2 228.3H1639.5"/>
<path d="M1650.5 223.3L1645 227.10000000000002Q1644 228.3 1646 228.3H1656"/>
<path d="M1672.5 223.5H1664.2A2.4 2.4 0 0 0 1664.2 228.3H1672.5"/>
<path d="M1677 228.3H1689.5"/><path d="M1684.6 228.3V225.8" stroke-width="1.3"/><circle cx="1684.6" cy="225.3" r="1.1" fill="#111" stroke="none"/>
<path d="M1694 225.8H1700" stroke-width="2"/><path d="M1699 224.8Q1702.2 224.20000000000002 1703.3 220.4H1704.5V231.20000000000002H1703.3Q1702.2 227.4 1699 226.8Z" fill="#111" stroke="none"/>
<path d="M1710 225.8H1716.5" stroke-width="1.3"/><path d="M1722 222.0H1717V229.0H1722" stroke-width="1.2" stroke="#333"/>
</g>
<rect x="1608.7" y="452.7" width="33" height="14.5" fill="#d6d6d6" stroke="none"/>
<g stroke="#222" stroke-width="1" fill="none">
<rect x="1614.2" y="455.3" width="20" height="9.2" fill="#fff"/><path d="M1616 462.3H1632.5" stroke-width="1.6"/>
<rect x="1647.2" y="455.3" width="20" height="9.2"/><path d="M1649 462.3H1657" stroke-width="1.6"/>
<rect x="1680.2" y="455.3" width="20" height="9.2"/><path d="M1690 462.3H1698.5" stroke-width="1.6"/>
<path d="M1732.6 455.3H1713V460.6H1717.6V464.5H1732.6"/><path d="M1715 457.7H1732.3" stroke-width="1.5"/>
<path d="M1732.8 454.8V464.9M1730.8 460H1734.8M1731.5 458.7L1734.1 461.3M1734.1 458.7L1731.5 461.3" stroke="#f03030" stroke-width="0.8"/>
</g>
</svg>
<svg class="a" style="left:1520px;top:790px" width="330" height="224" viewBox="1520 790 330 224" font-family="Liberation Sans"><rect x="1544.5" y="799.5" width="273" height="73.5" fill="none" stroke="#4a4a4a" stroke-width="1"/><circle cx="1544.5" cy="799.5" r="1.9" fill="#fff" stroke="#8a8a8a" stroke-width="0.8"/><circle cx="1817.5" cy="799.5" r="1.9" fill="#fff" stroke="#8a8a8a" stroke-width="0.8"/><circle cx="1682" cy="799.5" r="1.9" fill="#fff" stroke="#8a8a8a" stroke-width="0.8"/><circle cx="1544.5" cy="836.8" r="1.9" fill="#fff" stroke="#8a8a8a" stroke-width="0.8"/><circle cx="1817.5" cy="836.8" r="1.9" fill="#fff" stroke="#8a8a8a" stroke-width="0.8"/><circle cx="1682" cy="836.8" r="1.9" fill="#fff" stroke="#8a8a8a" stroke-width="0.8"/><circle cx="1682" cy="873" r="1.9" fill="#fff" stroke="#8a8a8a" stroke-width="0.8"/><circle cx="1544.5" cy="873" r="2.2" fill="#f5905a"/><circle cx="1817.5" cy="873" r="2.2" fill="#f5905a"/><path d="M1598 854L1778.7 825.7" stroke="#f5905a" stroke-width="2.2"/><g stroke="#9a9a9a" stroke-width="0.9" fill="none"><path d="M1582 853V873M1577.5 853H1592.5M1579.5 850.5L1584.5 855.5M1579.5 870.5L1584.5 875.5M1576 873H1592"/><path d="M1792.5 825.5V873M1781.5 825.5H1797.5M1790 823L1795 828M1790 870.5L1795 875.5M1781 873H1797"/><path d="M1544.5 882.5V897M1596 882.5V897M1541 893.7H1599.5M1542 896.2L1547 891.2M1593.5 896.2L1598.5 891.2"/><path d="M1776.5 882.5V897M1817.5 882.5V897M1773 893.7H1821M1774 896.2L1779 891.2M1815 896.2L1820 891.2"/><path d="M1567.5 966.5V983M1563.5 966.5H1578.5M1565 964L1570 969M1565 980.5L1570 985.5M1562 983H1578"/><path d="M1544.5 991V1006M1589 991V1006M1541 1003H1592.5M1542 1005.5L1547 1000.5M1586.5 1005.5L1591.5 1000.5"/><path d="M1780.5 965V983M1776 965H1791M1778 962.5L1783 967.5M1778 980.5L1783 985.5M1776 983H1791"/><path d="M1798 991V1006M1817.5 991V1006M1779 1003H1821M1795.5 1005.5L1800.5 1000.5M1815 1005.5L1820 1000.5"/></g><text transform="translate(1536.0,810.5) scale(1.09,1)" font-size="14.8" fill="#222" text-anchor="middle">4</text><text transform="translate(1689.0,815.0) scale(1.09,1)" font-size="14.8" fill="#222" text-anchor="middle">7</text><text transform="translate(1828.0,812.0) scale(1.09,1)" font-size="14.8" fill="#222" text-anchor="middle">3</text><text transform="translate(1536.0,852.0) scale(1.09,1)" font-size="14.8" fill="#222" text-anchor="middle">8</text><text transform="translate(1828.5,850.5) scale(1.09,1)" font-size="14.8" fill="#222" text-anchor="middle">6</text><text transform="translate(1700.5,849.3) scale(1.09,1)" font-size="14.8" fill="#222" text-anchor="middle">0=9</text><text transform="translate(1689.0,889.0) scale(1.09,1)" font-size="14.8" fill="#222" text-anchor="middle">5</text><text transform="translate(1534.0,886.0) scale(1.09,1)" font-size="14.8" fill="#f5905a" text-anchor="middle">1</text><text transform="translate(1828.0,886.0) scale(1.09,1)" font-size="14.8" fill="#f5905a" text-anchor="middle">2</text><text transform="translate(1759.5,905.3) scale(1.09,1)" font-size="14.8" fill="#222" text-anchor="middle">T</text><text transform="translate(1565.5,866.5) scale(1.09,1)" font-size="14.8" fill="#222">Z<tspan font-size="9" dy="2.5">1</tspan></text><text transform="translate(1795.3,854.0) scale(1.09,1)" font-size="14.8" fill="#222">Z<tspan font-size="9" dy="2.5">2</tspan></text><text transform="translate(1564.0,890.5) scale(1.09,1)" font-size="14.8" fill="#222">X<tspan font-size="9" dy="2.5">1</tspan></text><text transform="translate(1791.0,890.5) scale(1.09,1)" font-size="14.8" fill="#222">X<tspan font-size="9" dy="2.5">2</tspan></text><path d="M1544.5 909.5H1666.7V942.5L1660 946L1672.5 947L1666.7 950.5V983H1544.5Z" fill="none" stroke="#4a4a4a" stroke-width="1" stroke-linejoin="miter"/><circle cx="1544.5" cy="909.5" r="1.9" fill="#fff" stroke="#8a8a8a" stroke-width="0.8"/><circle cx="1544.5" cy="946.8" r="1.9" fill="#fff" stroke="#8a8a8a" stroke-width="0.8"/><circle cx="1544.5" cy="983" r="2.2" fill="#f5905a"/><path d="M1589.5 966.8H1652.7V923.7" stroke="#f5905a" stroke-width="2.2" fill="none"/><text transform="translate(1536.0,923.5) scale(1.09,1)" font-size="14.8" fill="#222" text-anchor="middle">4</text><text transform="translate(1536.0,962.0) scale(1.09,1)" font-size="14.8" fill="#222" text-anchor="middle">8</text><text transform="translate(1534.0,996.5) scale(1.09,1)" font-size="14.8" fill="#f5905a" text-anchor="middle">1</text><text transform="translate(1549.0,977.5) scale(1.09,1)" font-size="14.8" fill="#222">Z<tspan font-size="9" dy="2.5">1</tspan></text><text transform="translate(1560.0,999.0) scale(1.09,1)" font-size="14.8" fill="#222">X<tspan font-size="9" dy="2.5">1</tspan></text><path d="M1817.5 909.5H1695.7V942.5L1702 946L1689.5 947L1695.7 950.5V983H1817.5Z" fill="none" stroke="#4a4a4a" stroke-width="1"/><path d="M1696 965.2H1799.5" stroke="#f5905a" stroke-width="2.6"/><text transform="translate(1829.0,952.5) scale(1.09,1)" font-size="14.8" fill="#222" text-anchor="middle">R</text><text transform="translate(1771.0,977.5) scale(1.09,1)" font-size="14.8" fill="#222" text-anchor="middle">c</text><text transform="translate(1787.5,1000.3) scale(1.09,1)" font-size="14.8" fill="#222" text-anchor="middle">c</text><text transform="translate(1758.5,1004.5) scale(1.09,1)" font-size="14.8" fill="#f5905a" text-anchor="middle">B</text><path d="M1742.5 988H1766" stroke="#f5905a" stroke-width="0.9"/><polygon points="1772.5,988 1762,985.3 1762,990.7" fill="#f5905a"/></svg>
<!-- annotations -->
<div class="red" style="left:768.2px;top:43.3px;width:47.2px;height:61.8px;border-width:4px;border-radius:9px"></div>
<div class="red" style="left:1449.3px;top:160px;width:361.4px;height:22.7px;border-width:4px;border-radius:9px"></div>
<div class="red" style="left:1449.3px;top:278px;width:361.4px;height:94.2px;border-width:4px;border-radius:9px"></div>
<div class="red" style="left:1449.3px;top:412.8px;width:361.4px;height:39.2px;border-width:4px;border-radius:9px"></div>
<svg class="a" style="left:770px;top:0" width="50" height="45" viewBox="770 0 50 45"><text x="781.8" y="34.7" font-family="Liberation Sans" font-weight="bold" font-size="31.5" fill="#ff2b2b" textLength="20.5" lengthAdjust="spacingAndGlyphs">1</text></svg>
<svg class="a" style="left:975px;top:455px" width="40" height="45" viewBox="975 455 40 45"><text x="980.9" y="489" font-family="Liberation Sans" font-weight="bold" font-size="32.5" fill="#ff2b2b" textLength="19.6" lengthAdjust="spacingAndGlyphs">2</text></svg>
<svg class="a" style="left:1415px;top:128px" width="30" height="45" viewBox="1415 128 30 45"><text x="1422.2" y="160.8" font-family="Liberation Sans" font-weight="bold" font-size="33.5" fill="#ff2b2b" textLength="17" lengthAdjust="spacingAndGlyphs">3</text></svg>
<div class="a" id="sb-top" style="left:0;top:1016px;width:1920px;height:1px;background:#a8a8a8"></div>
<div class="a" id="status"></div>
<div class="a" style="left:0;top:1040px;width:1920px;height:1px;background:#4e5558"></div>
<div class="a" style="left:0;top:1041px;width:1920px;height:1px;background:#d6eaf0"></div>
<div class="t st" style="left:6px;letter-spacing:-0.28px">Design Code: EN</div>
<div class="t st" style="left:83px">Rounding: Metric</div>
<div class="t st" style="left:163.5px;letter-spacing:-0.08px">Presentation Units: Metric</div>
</div><!--root-->
</body>
</html>
